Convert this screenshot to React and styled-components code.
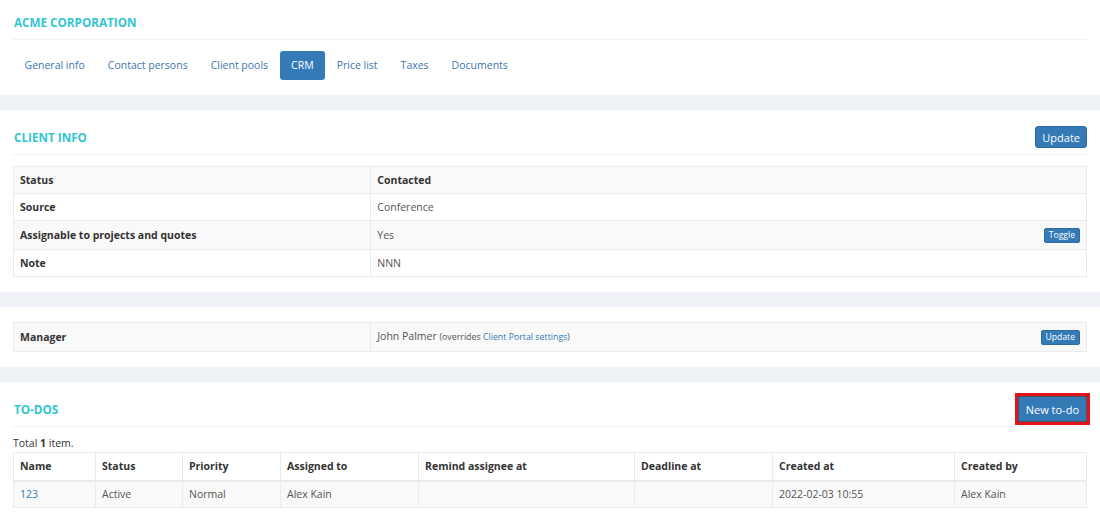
import React from "react"
import styled, { createGlobalStyle } from "styled-components"

const GlobalStyle = createGlobalStyle`
  html, body {
    margin: 0;
    padding: 0;
    background: #eef1f5;
    font-family: "Open Sans", "Liberation Sans", sans-serif;
    font-size: 10.5px;
    color: #333;
  }
  * { box-sizing: border-box; }
`

const Page = styled.div`
  display: flex;
  flex-direction: column;
  gap: 15px;
  width: 1100px;
`

const Panel = styled.section`
  background: #fff;
  padding: 0 13px ${p => p.$bottom ?? 15}px;
  padding-top: ${p => p.$top ?? 0}px;
`

const TitleBar = styled.div`
  display: flex;
  align-items: center;
  justify-content: space-between;
  height: ${p => p.$h ?? 34}px;
  padding-top: ${p => p.$pt}px;
  box-sizing: content-box;
  border-bottom: 1px solid #eef1f5;
`

const Caption = styled.h2`
  margin: 0;
  font-size: 11.7px;
  font-weight: 700;
  color: #32c5d2;
  text-transform: uppercase;
  padding-left: 1px;
`

const Button = styled.button`
  font-family: inherit;
  font-size: ${p => (p.$small ? "8.6px" : "11px")};
  line-height: 1;
  color: #fff;
  background: #337ab7;
  border: 1px solid #2e6da4;
  border-radius: ${p => (p.$small ? "2px" : "3px")};
  padding: ${p => (p.$small ? "0 4px" : "0 6px")};
  height: ${p => (p.$small ? "15px" : "22px")};
  cursor: pointer;
  white-space: nowrap;
`

const MarkFrame = styled.span`
  display: inline-flex;
  border: 3px solid #e3131b;
  margin-right: -3px;
  box-shadow: inset 0 0 0 1px #8a1a1a;
`

const MarkedButton = styled(Button)`
  height: 26px;
  padding: 0 7px;
  border: 1px solid #4a5560;
  border-radius: 2px;
`

const Tabs = styled.nav`
  display: flex;
  margin-top: 11px;
`

const Tab = styled.a`
  display: block;
  height: 29px;
  line-height: 29px;
  padding: 0 11.5px;
  font-size: 10.5px;
  color: ${p => (p.$active ? "#fff" : "#3f74ad")};
  background: ${p => (p.$active ? "#337ab7" : "transparent")};
  border-radius: 3px;
  text-decoration: none;
  cursor: pointer;
`

const Table = styled.table`
  width: 100%;
  border-collapse: collapse;
  margin-top: ${p => p.$mt ?? 0}px;
  border: 1px solid #e7ecf1;
  font-size: 10.5px;
`

const Row = styled.tr`
  background: ${p => (p.$striped ? "#f9f9f9" : "#fff")};
`

const Cell = styled.td`
  border: 1px solid #e7ecf1;
  padding: 4px 6px;
  height: ${p => p.$h ?? 27}px;
  line-height: 15px;
  font-weight: ${p => (p.$bold ? 700 : 400)};
  color: ${p => (p.$bold ? "#333" : "#555")};
  width: ${p => p.$w ?? "auto"};
  vertical-align: middle;
`

const HeadCell = styled.th`
  border: 1px solid #e7ecf1;
  border-bottom: 2px solid #e7ecf1;
  padding: 4px 6px;
  height: 28px;
  text-align: left;
  font-weight: 700;
  color: #333;
  width: ${p => p.$w};
`

const CellInner = styled.div`
  display: flex;
  align-items: center;
  justify-content: space-between;
`

const Note = styled.span`
  font-size: 8.8px;
  color: #555;
`

const Link = styled.a`
  color: #337ab7;
  text-decoration: none;
`

const Total = styled.div`
  margin-top: 9px;
  font-size: 10.5px;
  line-height: 14px;
  color: #333;
`

const tabs = ["General info", "Contact persons", "Client pools", "CRM", "Price list", "Taxes", "Documents"]

const info = [
  ["Status", "Contacted", true],
  ["Source", "Conference"],
  ["Assignable to projects and quotes", "Yes", false, true],
  ["Note", "NNN"],
]

const todoCols = [
  ["Name", "82px"],
  ["Status", "87px"],
  ["Priority", "98px"],
  ["Assigned to", "138px"],
  ["Remind assignee at", "216px"],
  ["Deadline at", "138px"],
  ["Created at", "182px"],
  ["Created by", "auto"],
]

export default function App() {
  return (
    <>
      <GlobalStyle />
      <Page>
        <Panel>
          <TitleBar $pt={5} $h={34}>
            <Caption>Acme Corporation</Caption>
          </TitleBar>
          <Tabs>
            {tabs.map(t => (
              <Tab key={t} $active={t === "CRM"}>{t}</Tab>
            ))}
          </Tabs>
        </Panel>

        <Panel>
          <TitleBar $pt={10}>
            <Caption>Client info</Caption>
            <Button>Update</Button>
          </TitleBar>
          <Table $mt={11}>
            <tbody>
              {info.map(([k, v, boldValue, toggle], i) => (
                <Row key={k} $striped={i % 2 === 0}>
                  <Cell $bold $w="33.3%" $h={toggle ? 29 : 27}>{k}</Cell>
                  <Cell $bold={boldValue}>
                    <CellInner>
                      <span>{v}</span>
                      {toggle && <Button $small>Toggle</Button>}
                    </CellInner>
                  </Cell>
                </Row>
              ))}
            </tbody>
          </Table>
        </Panel>

        <Panel $top={15}>
          <Table>
            <tbody>
              <Row $striped>
                <Cell $bold $w="33.3%" $h={29}>Manager</Cell>
                <Cell>
                  <CellInner>
                    <span>
                      John Palmer <Note>(overrides <Link>Client Portal settings</Link>)</Note>
                    </span>
                    <Button $small>Update</Button>
                  </CellInner>
                </Cell>
              </Row>
            </tbody>
          </Table>
        </Panel>

        <Panel>
          <TitleBar $pt={10}>
            <Caption>To-dos</Caption>
            <MarkFrame>
              <MarkedButton>New to-do</MarkedButton>
            </MarkFrame>
          </TitleBar>
          <Total>Total <b>1</b> item.</Total>
          <Table $mt={2}>
            <thead>
              <Row>
                {todoCols.map(([c, w]) => (
                  <HeadCell key={c} $w={w}>{c}</HeadCell>
                ))}
              </Row>
            </thead>
            <tbody>
              <Row $striped>
                <Cell><Link>123</Link></Cell>
                <Cell>Active</Cell>
                <Cell>Normal</Cell>
                <Cell>Alex Kain</Cell>
                <Cell></Cell>
                <Cell></Cell>
                <Cell>2022-02-03 10:55</Cell>
                <Cell>Alex Kain</Cell>
              </Row>
            </tbody>
          </Table>
        </Panel>
      </Page>
    </>
  )
}
